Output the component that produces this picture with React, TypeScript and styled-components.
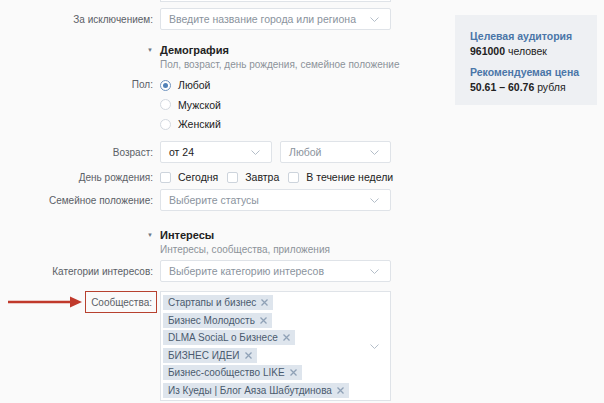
import { FC, ReactNode } from 'react'
import styled, { createGlobalStyle } from 'styled-components'

const GlobalStyle = createGlobalStyle`
  html, body {
    margin: 0;
    padding: 0;
    background: #fafafa;
  }
  body {
    font-family: 'Liberation Sans', Arial, sans-serif;
    font-size: 10.5px;
    color: #222;
    width: 604px;
    height: 403px;
    overflow: hidden;
    white-space: nowrap;
  }
`

const communities = [
  'Стартапы и бизнес',
  'Бизнес Молодость',
  'DLMA SociaL о Бизнесе',
  'БИЗНЕС ИДЕИ',
  'Бизнес-сообщество LIKE',
  'Из Куеды | Блог Аяза Шабутдинова'
]

const Chevron: FC = () => (
  <ChevronIcon width="9" height="5" viewBox="0 0 9 5">
    <path d="M0.5 0.5 L4.5 4.5 L8.5 0.5" fill="none" stroke="#b4bec9" strokeWidth="1" />
  </ChevronIcon>
)

const Cross: FC = () => (
  <CrossIcon width="7" height="7" viewBox="0 0 7 7">
    <path d="M0.5 0.5 L6.5 6.5 M6.5 0.5 L0.5 6.5" stroke="#8fa1b6" strokeWidth="1.3" />
  </CrossIcon>
)

const Select: FC<{ value?: string; placeholder?: string; $w?: number }> = ({ value, placeholder, $w }) => (
  <SelectBox $w={$w}>
    {value ? <Value>{value}</Value> : <Placeholder>{placeholder}</Placeholder>}
    <Chevron />
  </SelectBox>
)

const Row: FC<{ label?: ReactNode; $mt: number; $align?: string; children: ReactNode }> = ({
  label,
  $mt,
  $align,
  children
}) => (
  <RowBox $mt={$mt} $align={$align}>
    <Label>{label}</Label>
    <Control>{children}</Control>
  </RowBox>
)

const Arrow: FC = () => (
  <svg width="74" height="12" viewBox="0 0 74 12">
    <line x1="0" y1="6" x2="64" y2="6" stroke="#c0392b" strokeWidth="2.4" />
    <path d="M62 0.5 L74 6 L62 11.5 Z" fill="#c0392b" />
  </svg>
)

const App: FC = () => {
  return (
    <>
      <GlobalStyle />
      <Page>
        <Main>
          <Row $mt={0}>
            <ClippedField />
          </Row>
          <Row label="За исключением:" $mt={6}>
            <Select placeholder="Введите название города или региона" />
          </Row>

          <Section $mt={13}>
            <Triangle>▼</Triangle>
            <SectionText>
              <SectionTitle>Демография</SectionTitle>
              <SectionSub>Пол, возраст, день рождения, семейное положение</SectionSub>
            </SectionText>
          </Section>

          <RowBox $mt={5} $align="flex-start">
            <Label $lh={16}>Пол:</Label>
            <Control>
              <RadioList>
                <Option>
                  <Radio $checked />
                  Любой
                </Option>
                <Option>
                  <Radio />
                  Мужской
                </Option>
                <Option>
                  <Radio />
                  Женский
                </Option>
              </RadioList>
            </Control>
          </RowBox>

          <Row label="Возраст:" $mt={9}>
            <Pair>
              <Select value="от 24" $w={112} />
              <Select placeholder="Любой" $w={111} />
            </Pair>
          </Row>

          <Row label="День рождения:" $mt={6}>
            <Checks>
              <Option>
                <Checkbox />
                Сегодня
              </Option>
              <Option>
                <Checkbox />
                Завтра
              </Option>
              <Option>
                <Checkbox />В течение недели
              </Option>
            </Checks>
          </Row>

          <Row label="Семейное положение:" $mt={4}>
            <Select placeholder="Выберите статусы" />
          </Row>

          <Section $mt={17}>
            <Triangle>▼</Triangle>
            <SectionText>
              <SectionTitle>Интересы</SectionTitle>
              <SectionSub>Интересы, сообщества, приложения</SectionSub>
            </SectionText>
          </Section>

          <Row label="Категории интересов:" $mt={3}>
            <Select placeholder="Выберите категорию интересов" />
          </Row>

          <RowBox $mt={9} $align="flex-start">
            <Label>
              <Marked>
                <Arrow />
                <MarkedLabel>Сообщества:</MarkedLabel>
              </Marked>
            </Label>
            <Control>
              <TagBox>
                <Tags>
                  {communities.map((c) => (
                    <Tag key={c}>
                      {c}
                      <Cross />
                    </Tag>
                  ))}
                </Tags>
                <Chevron />
              </TagBox>
            </Control>
          </RowBox>
        </Main>

        <Aside>
          <StatTitle>Целевая аудитория</StatTitle>
          <StatValue>
            <b>961000</b> человек
          </StatValue>
          <StatTitle $mt={7}>Рекомендуемая цена</StatTitle>
          <StatValue>
            <b>50.61 – 60.76</b> рубля
          </StatValue>
        </Aside>
      </Page>
    </>
  )
}

const Page = styled.div`
  display: flex;
  align-items: flex-start;
  width: 604px;
  height: 403px;
  overflow: hidden;
`

const Main = styled.div`
  width: 391px;
  flex-shrink: 0;
  display: flex;
  flex-direction: column;
`

const RowBox = styled.div<{ $mt: number; $align?: string }>`
  display: flex;
  align-items: ${(p) => p.$align || 'center'};
  gap: 7px;
  margin-top: ${(p) => p.$mt}px;
`

const Label = styled.div<{ $lh?: number }>`
  width: 153px;
  flex-shrink: 0;
  text-align: right;
  font-size: 10px;
  color: #5b6066;
  line-height: ${(p) => (p.$lh ? `${p.$lh}px` : 'normal')};
  display: flex;
  justify-content: flex-end;
`

const Control = styled.div`
  width: 231px;
  flex-shrink: 0;
`

const ClippedField = styled.div`
  height: 1px;
  background: #fff;
  border: 1px solid #dfe3e8;
  border-top: none;
`

const SelectBox = styled.div<{ $w?: number }>`
  box-sizing: border-box;
  width: ${(p) => (p.$w ? `${p.$w}px` : '100%')};
  height: 22px;
  background: #fff;
  border: 1px solid #dfe3e8;
  border-radius: 2px;
  display: flex;
  align-items: center;
  justify-content: space-between;
  padding: 0 11px 0 8px;
`

const Value = styled.span`
  color: #222;
`

const Placeholder = styled.span`
  color: #8a939d;
`

const ChevronIcon = styled.svg`
  flex-shrink: 0;
`

const CrossIcon = styled.svg`
  flex-shrink: 0;
`

const Pair = styled.div`
  display: flex;
  justify-content: space-between;
`

const Section = styled.div<{ $mt: number }>`
  display: flex;
  align-items: flex-start;
  margin-top: ${(p) => p.$mt}px;
  padding-left: 147px;
`

const Triangle = styled.span`
  width: 13px;
  flex-shrink: 0;
  font-size: 6px;
  line-height: 14px;
  color: #6d7885;
`

const SectionText = styled.div`
  display: flex;
  flex-direction: column;
`

const SectionTitle = styled.div`
  font-size: 11px;
  font-weight: bold;
  line-height: 14px;
  color: #222;
`

const SectionSub = styled.div`
  margin-top: 1px;
  font-size: 10px;
  line-height: 14px;
  color: #8c9299;
`

const RadioList = styled.div`
  display: flex;
  flex-direction: column;
  gap: 3.5px;
`

const Option = styled.label`
  display: flex;
  align-items: center;
  gap: 7px;
  line-height: 16px;
  color: #222;
  white-space: nowrap;
`

const Radio = styled.span<{ $checked?: boolean }>`
  box-sizing: border-box;
  width: 11px;
  height: 11px;
  border-radius: 50%;
  background: #fff;
  border: 1px solid ${(p) => (p.$checked ? '#6f93bf' : '#d3d9e0')};
  display: flex;
  align-items: center;
  justify-content: center;

  &::after {
    content: '';
    width: 5px;
    height: 5px;
    border-radius: 50%;
    background: #5181b8;
    display: ${(p) => (p.$checked ? 'block' : 'none')};
  }
`

const Checks = styled.div`
  display: flex;
  gap: 9px;
`

const Checkbox = styled.span`
  box-sizing: border-box;
  width: 11px;
  height: 11px;
  border-radius: 2px;
  background: #fff;
  border: 1px solid #cdd4dc;
`

const Marked = styled.div`
  display: flex;
  align-items: center;
  gap: 3px;
  margin-right: -4px;
`

const MarkedLabel = styled.div`
  box-sizing: border-box;
  height: 22px;
  padding: 0 4px 0 5px;
  display: flex;
  align-items: center;
  border: 1.5px solid #b7412f;
  color: #5b6066;
`

const TagBox = styled.div`
  box-sizing: border-box;
  min-height: 110px;
  background: #fff;
  border: 1px solid #dfe3e8;
  display: flex;
  align-items: center;
  justify-content: space-between;
  padding: 2px 11px 1px 2px;
`

const Tags = styled.div`
  display: flex;
  flex-direction: column;
  align-items: flex-start;
  gap: 2.5px;
`

const Tag = styled.div`
  height: 15px;
  padding: 0 5px;
  font-size: 10px;
  background: #dee5ed;
  color: #4a5a6e;
  display: flex;
  align-items: center;
  gap: 5px;
  white-space: nowrap;
`

const Aside = styled.div`
  box-sizing: border-box;
  margin: 15px 0 0 64px;
  width: 142px;
  flex-shrink: 0;
  height: 90px;
  background: #eef0f3;
  padding: 14px 15px;
`

const StatTitle = styled.div<{ $mt?: number }>`
  margin-top: ${(p) => p.$mt || 0}px;
  font-size: 10.5px;
  font-weight: bold;
  line-height: 14px;
  color: #4a76a8;
  white-space: nowrap;
`

const StatValue = styled.div`
  margin-top: 1px;
  line-height: 14px;
  color: #222;

  b {
    font-weight: bold;
  }
`

export default App
